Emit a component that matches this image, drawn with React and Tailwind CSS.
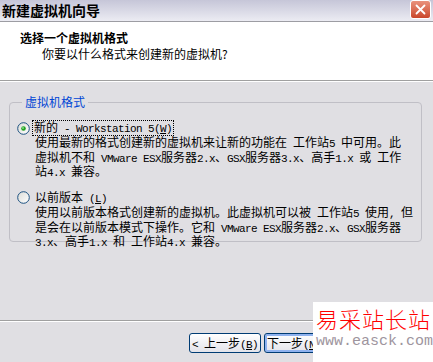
const M = ({ children }) => (
  <span className="font-['Liberation_Mono',monospace] text-[11px] tracking-[-0.6px]">
    {children}
  </span>
);

const Radio = ({ checked }) => (
  <svg width="13" height="13" viewBox="0 0 13 13" className="shrink-0">
    <defs>
      <linearGradient id={checked ? "rg1" : "rg2"} x1="0" y1="0" x2="1" y2="1">
        <stop offset="0" stopColor="#dcdcd7" />
        <stop offset="1" stopColor="#ffffff" />
      </linearGradient>
    </defs>
    <circle cx="6.5" cy="6.5" r="5.8" fill={`url(#${checked ? "rg1" : "rg2"})`} stroke="#1c5180" strokeWidth="1" />
    {checked && <circle cx="6.5" cy="6.5" r="2.3" fill="#21a121" />}
    {checked && <circle cx="6" cy="6" r="0.9" fill="#8fe08f" />}
  </svg>
);

const XpButton = ({ children, isDefault, className = "" }) => (
  <button
    className={`w-[72px] h-[20px] rounded-[3px] border border-[#003c74] bg-gradient-to-b from-white to-[#e3e3ea] text-[12px] leading-[18px] text-center whitespace-pre text-black ${
      isDefault ? "shadow-[inset_0_0_0_2px_#8fb2ef]" : ""
    } ${className}`}
  >
    {children}
  </button>
);

const App = () => {
  return (
    <div className="w-[433px] h-[362px] overflow-hidden relative bg-[#e0dfe3] font-['Noto_Sans_CJK_SC',sans-serif] text-black">
      {/* TITLE BAR */}
      <div className="h-[22px] flex items-start justify-between bg-gradient-to-b from-[#c6c6d8] to-[#ececf3] border-b border-[#9d9da3]">
        <span className="pl-[2px] pt-[2px] text-[14px] font-bold leading-[16px]">新建虚拟机向导</span>
        <div className="mr-[2px] w-[21px] h-[19px] rounded-[3px] border border-white bg-gradient-to-b from-[#e9927c] to-[#c9462a] flex items-center justify-center">
          <svg width="11" height="11" viewBox="0 0 11 11">
            <path d="M1.5 1.5 L9.5 9.5 M9.5 1.5 L1.5 9.5" stroke="white" strokeWidth="1.8" strokeLinecap="round" />
          </svg>
        </div>
      </div>

      {/* HEADER */}
      <div className="h-[59px] bg-white border-b border-[#a0a0a0] pt-[9px]">
        <div className="pl-[20px] text-[12px] font-bold leading-[14px]">选择一个虚拟机格式</div>
        <div className="pl-[42px] pt-[2px] text-[12px] leading-[14px]">你要以什么格式来创建新的虚拟机?</div>
      </div>
      <div className="h-px bg-white" />

      {/* BODY */}
      <div className="h-[238px] px-[9px] pt-[14px]">
        <fieldset className="w-[413px] h-[146px] border border-[#c0bfc6] rounded-[4px] pl-[7px]">
          <legend className="ml-[5px] px-[3px] text-[12px] leading-[12px] text-[#0046d5]">虚拟机格式</legend>

          <div className="pt-[12px] text-[12px] leading-[12.5px]">
            <div className="flex items-center">
              <Radio checked />
              <span className="ml-[2px] px-[1px] border border-dotted border-black leading-[12px]">
                新的<M> - Workstation 5(<u>W</u>)</M>
              </span>
            </div>
            <div className="pl-[18px] whitespace-nowrap">
              <div>使用最新的格式创建新的虚拟机来让新的功能在<M> </M>工作站<M>5 </M>中可用。此</div>
              <div>虚拟机不和<M> VMware ESX</M>服务器<M>2.x</M>、<M>GSX</M>服务器<M>3.x</M>、高手<M>1.x </M>或<M> </M>工作</div>
              <div>站<M>4.x </M>兼容。</div>
            </div>

            <div className="flex items-center mt-[11px]">
              <Radio />
              <span className="ml-[5px]">以前版本<M> (<u>L</u>)</M></span>
            </div>
            <div className="pl-[18px] pt-[1px] whitespace-nowrap">
              <div>使用以前版本格式创建新的虚拟机。此虚拟机可以被<M> </M>工作站<M>5 </M>使用<M>, </M>但</div>
              <div>是会在以前版本模式下操作。它和<M> VMware ESX</M>服务器<M>2.x</M>、<M>GSX</M>服务器</div>
              <div><M>3.x</M>、高手<M>1.x </M>和<M> </M>工作站<M>4.x </M>兼容。</div>
            </div>
          </div>
        </fieldset>
      </div>

      {/* FOOTER */}
      <div className="border-t border-[#a0a0a0]">
        <div className="h-px bg-white" />
        <div className="flex justify-end pr-[14px] pt-[11px]">
          <XpButton>
            <M>&lt; </M>上一步<M>(<u>B</u>)</M>
          </XpButton>
          <XpButton isDefault className="ml-[3px]">
            下一步<M>(<u>N</u>) &gt;</M>
          </XpButton>
          <XpButton className="ml-[11px]">取消</XpButton>
        </div>
      </div>

      {/* WATERMARK */}
      <div className="absolute right-0 bottom-0 z-10 w-[120px] h-[60px] bg-white pl-[3px] pt-[2px]">
        <div className="text-[22px] font-light leading-[28px] tracking-[1px] text-[#ff0000] whitespace-nowrap">易采站长站</div>
        <div className="font-['Liberation_Mono',monospace] text-[15px] leading-[20px] text-[#9e959e] whitespace-nowrap">
          www.easck.com
        </div>
      </div>
    </div>
  );
};

export default App;
